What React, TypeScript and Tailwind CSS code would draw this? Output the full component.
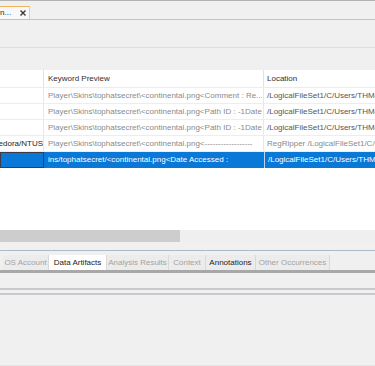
import React from "react";

type Row = {
  source: string;
  preview: string;
  location: string;
  selected?: boolean;
  dim?: boolean;
};

const rows: Row[] = [
  {
    source: "",
    preview: "Player\\Skins\\tophatsecret\\<continental.png<Comment : Re...",
    location: "/LogicalFileSet1/C/Users/THM-RFedora",
  },
  {
    source: "",
    preview: "Player\\Skins\\tophatsecret\\<continental.png<Path ID : -1Date",
    location: "/LogicalFileSet1/C/Users/THM-RFedora",
  },
  {
    source: "",
    preview: "Player\\Skins\\tophatsecret\\<continental.png<Path ID : -1Date",
    location: "/LogicalFileSet1/C/Users/THM-RFedora",
  },
  {
    source: "Fedora/NTUS",
    preview: "Player\\Skins\\tophatsecret\\<continental.png<------------------",
    location: "RegRipper /LogicalFileSet1/C/Users",
    dim: true,
  },
  {
    source: "",
    preview: "ins/tophatsecret/<continental.png<Date Accessed :",
    location: "/LogicalFileSet1/C/Users/THM-RFedora",
    selected: true,
  },
];

const tabs = [
  { label: "OS Account", w: "w-[46px]", active: false, dark: false },
  { label: "Data Artifacts", w: "w-[58px]", active: true, dark: true },
  { label: "Analysis Results", w: "w-[62px]", active: false, dark: false },
  { label: "Context", w: "w-[37px]", active: false, dark: false },
  { label: "Annotations", w: "w-[50px]", active: false, dark: true },
  { label: "Other Occurrences", w: "w-[74px]", active: false, dark: false },
];

function CloseIcon() {
  return (
    <svg width="6" height="6" viewBox="0 0 6 6">
      <path d="M0.5 0.5 L5.5 5.5 M5.5 0.5 L0.5 5.5" stroke="#3a3a3a" strokeWidth="1.4" />
    </svg>
  );
}

export default function App() {
  return (
    <div
      className="w-[375px] h-[366px] overflow-hidden bg-[#f0f0f0] flex flex-col text-[8px] leading-none"
      style={{ fontFamily: '"Liberation Sans", Arial, sans-serif' }}
    >
      {/* top border */}
      <div className="h-px bg-[#b4b4b4]" />

      {/* editor tab strip */}
      <div className="h-[19px] flex items-end border-b-[1.5px] border-[#b5c7d1]">
        <div className="h-[13px] w-[30px] flex items-center justify-between pr-[3px] bg-[#f8f8f8] border-t-[1.5px] border-t-[#f2b35a] border-r border-r-[#c9d3d9]">
          <span className="text-[#2a2a2a]">n...</span>
          <CloseIcon />
        </div>
      </div>

      <div className="h-[27px]" />
      <div className="h-px bg-[#dedede]" />
      <div className="h-[22px]" />

      {/* results table */}
      <div className="bg-white flex flex-col">
        <div className="h-[18px] flex border-b border-[#ececec] text-[#2f2f2f]">
          <div className="w-[44px] border-r border-[#e2e2e2]" />
          <div className="w-[220px] pl-[4px] flex items-center border-r border-[#e2e2e2]">Keyword Preview</div>
          <div className="flex-1 pl-[3px] flex items-center">Location</div>
        </div>

        {rows.map((r, i) => (
          <div
            key={i}
            className={`h-[16px] flex whitespace-nowrap ${
              r.selected ? "bg-[#0a78d7] text-white" : "border-b border-[#ededed] text-[#8a8a8a]"
            }`}
          >
            <div
              className={`w-[44px] flex items-center justify-end overflow-hidden ${
                r.selected ? "border border-[#3d3a4a]" : "border-r border-[#e8e8e8] text-[#1e1e1e]"
              }`}
            >
              {r.source}
            </div>
            <div className={`w-[220px] pl-[4px] flex items-center overflow-hidden ${r.selected ? "" : "border-r border-[#e8e8e8]"}`}>
              {r.preview}
            </div>
            <div
              className={`flex-1 pl-[3px] flex items-center overflow-hidden ${
                r.selected ? "border-l border-[#b9d6f2]" : r.dim ? "text-[#8a8a8a]" : "text-[#555555]"
              }`}
            >
              {r.location}
            </div>
          </div>
        ))}

        <div className="h-[62px]" />
      </div>

      {/* horizontal scrollbar */}
      <div className="h-[12px] flex bg-[#efefef]">
        <div className="w-[180px] bg-[#cdcdcd]" />
      </div>

      <div className="h-[8px]" />
      <div className="h-px bg-[#abbcc7]" />
      <div className="h-[4px]" />

      {/* content viewer tabs */}
      <div className="h-[15px] flex pl-[3px]">
        {tabs.map((t) => (
          <div
            key={t.label}
            className={`${t.w} flex items-center justify-center border-r border-[#d9d9d9] whitespace-nowrap ${
              t.active ? "bg-white" : "bg-[#ececec]"
            } ${t.dark ? "text-[#1c1c1c]" : "text-[#a3a3a3]"}`}
          >
            {t.label}
          </div>
        ))}
      </div>

      <div className="h-[3px] bg-[#a8a8a8]" />
      <div className="h-[15px]" />
      <div className="h-[2px] bg-[#c9c9cd]" />
      <div className="h-[3px]" />
      <div className="h-[2px] bg-[#c9c9cd]" />
      <div className="flex-1" />
      <div className="h-px bg-[#e4e4e4]" />
    </div>
  );
}
